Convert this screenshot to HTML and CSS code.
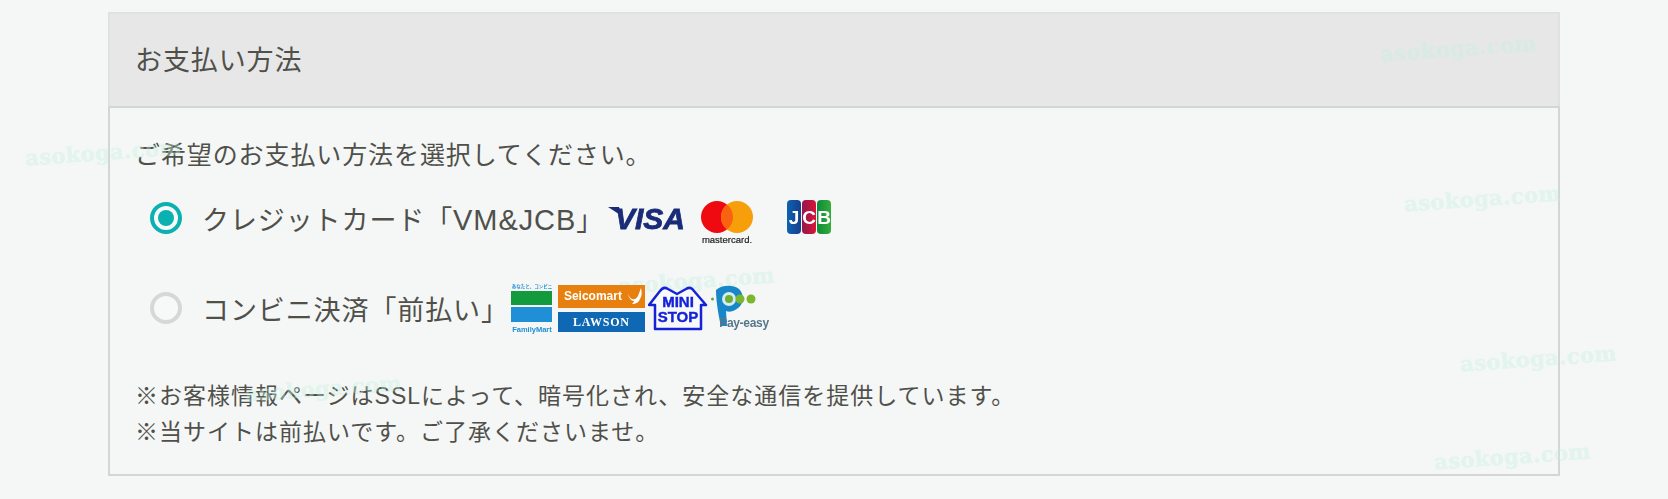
FILE: index.html
```html
<!DOCTYPE html>
<html lang="ja">
<head>
    <meta charset="UTF-8">
    <meta name="viewport" content="width=device-width, initial-scale=1.0">
    <title>お支払い方法</title>
    <link rel="stylesheet" href="styles.css">
</head>
<body>
<!-- Payment panel -->
<section class="panel">
    <h2 class="panel-title">お支払い方法</h2>
    <div class="panel-body">
        <p class="lead">ご希望のお支払い方法を選択してください。</p>

        <div class="pay-row pay-row-card">
            <span class="radio radio-on"></span>
            <span class="pay-label">クレジットカード「<span class="latin">VM&amp;JCB</span>」</span>
            <svg class="logo logo-visa" width="84" height="36" viewBox="0 0 84 36">
                <path d="M0 7h11l3 9z" fill="#1a2b78"/>
                <text x="7" y="29" class="visa-text">VISA</text>
            </svg>
            <svg class="logo logo-mc" width="54" height="48" viewBox="0 0 54 48">
                <circle cx="17" cy="17" r="16" fill="#ee0a10"/>
                <circle cx="37" cy="17" r="16" fill="#f79e0b"/>
                <path d="M27 4.500a16 16 0 0 1 0 25a16 16 0 0 1 0-25z" fill="#f9620f"/>
                <text x="27" y="43" class="mc-text">mastercard.</text>
            </svg>
            <svg class="logo logo-jcb" width="46" height="36" viewBox="0 0 46 36">
                <defs>
                    <linearGradient id="jcbBlue"><stop offset="0" stop-color="#0d62b0"/><stop offset="1" stop-color="#163f8c"/></linearGradient>
                    <linearGradient id="jcbRed"><stop offset="0" stop-color="#8e1a4e"/><stop offset="1" stop-color="#dc1437"/></linearGradient>
                    <linearGradient id="jcbGreen"><stop offset="0" stop-color="#0c8a3a"/><stop offset="1" stop-color="#35ad3a"/></linearGradient>
                </defs>
                <rect x="1" y="0" width="14" height="34" rx="4" fill="url(#jcbBlue)"/>
                <rect x="16" y="0" width="14" height="34" rx="4" fill="url(#jcbRed)"/>
                <rect x="31" y="0" width="14" height="34" rx="4" fill="url(#jcbGreen)"/>
                <text x="8" y="24" class="jcb-text">J</text>
                <text x="23" y="24" class="jcb-text">C</text>
                <text x="38" y="24" class="jcb-text">B</text>
            </svg>
        </div>

        <div class="pay-row pay-row-store">
            <span class="radio"></span>
            <span class="pay-label">コンビニ決済「前払い」</span>
            <svg class="logo logo-family" width="42" height="52" viewBox="0 0 42 52">
                <text x="21" y="6" class="fm-top">あなたと、コンビニ</text>
                <rect x="0" y="9" width="41" height="14" fill="#129a3c"/>
                <rect x="0" y="25" width="41" height="15" fill="#1f8fd6"/>
                <text x="21" y="50" class="fm-name">FamilyMart</text>
            </svg>
            <div class="store-stack">
                <div class="store-seico">
                    Seicomart
                    <svg class="seico-bird" width="16" height="20" viewBox="0 0 16 20">
                        <path d="M1 8c2 5 5 6 7 5 3-1 4-6 6-11 1 4 1 8-1 11-1 3-4 5-8 5 1-1 2-2 2-3-3 0-5-3-6-7z" fill="#fff"/>
                    </svg>
                </div>
                <div class="store-lawson">LAWSON</div>
            </div>
            <svg class="logo logo-mini" width="60" height="48" viewBox="0 0 60 48">
                <path d="M1 21 12 7c2-3 5-4 8-2l9 5 9-5c3-2 6-1 8 2l12 14h-5v24H7V21z" fill="#f8fafa" stroke="#1423d8" stroke-width="2.500" stroke-linejoin="round"/>
                <text x="30" y="23" class="mini-text">MINI</text>
                <text x="30" y="38" class="mini-text">STOP</text>
            </svg>
            <svg class="logo logo-easy" width="58" height="48" viewBox="0 0 58 48">
                <path d="M5 6C10 1 22 0 28 5c6 6 5 17-4 21-3 2-7 2-9 1l1 15h-6C7 30 5 15 5 6z" fill="#1787c9"/>
                <circle cx="18" cy="15" r="7" fill="#d5ecf3"/>
                <circle cx="18" cy="15" r="4" fill="#6fae37"/>
                <circle cx="1.500" cy="15" r="1.500" fill="#5aa84a"/>
                <circle cx="29" cy="15" r="4.500" fill="#7cb52e"/>
                <circle cx="40" cy="15" r="4.500" fill="#7cb52e"/>
                <text x="33" y="43" class="easy-text">Pay-easy</text>
            </svg>
        </div>

        <p class="note">※お客様情報ページはSSLによって、暗号化され、安全な通信を提供しています。<br>※当サイトは前払いです。ご了承くださいませ。</p>
    </div>
</section>

<!-- Watermarks -->
<span class="mark mark-1">asokoga.com</span>
<span class="mark mark-2">asokoga.com</span>
<span class="mark mark-3">asokoga.com</span>
<span class="mark mark-4">asokoga.com</span>
<span class="mark mark-5">asokoga.com</span>
<span class="mark mark-6">asokoga.com</span>
<span class="mark mark-7">asokoga.com</span>
</body>
</html>
```

FILE: styles.css
```css
body {
    font-family: "Liberation Sans", "Noto Sans CJK JP", sans-serif;
    background-color: #f5f7f6;
    color: #50504b;
    margin: 0;
    padding: 12px 108px 24px;
    overflow: hidden;
}

.panel-title {
    margin: 0;
    background-color: #e7e7e7;
    border: 2px solid #e0e1e0;
    border-bottom: none;
    font-size: 27px;
    font-weight: normal;
    letter-spacing: 0.9px;
    line-height: 38px;
    padding: 28px 25px 26px;
}

.panel-body {
    border: 2px solid #d3d6d4;
    padding: 28px 25px 24px;
}

.lead {
    margin: 0;
    font-size: 25px;
    letter-spacing: 0.9px;
    line-height: 38px;
}

.pay-row {
    display: flex;
    align-items: center;
    font-size: 27px;
    letter-spacing: 0.9px;
    padding-left: 15px;
}

.pay-row-card {
    height: 52px;
    margin-top: 18px;
}

.pay-row-store {
    height: 52px;
    margin-top: 38px;
}

.latin {
    font-size: 29px;
}

.radio {
    box-sizing: border-box;
    width: 32px;
    height: 32px;
    border: 4px solid #d6d7d6;
    border-radius: 50%;
    background-color: #f7f8f8;
    margin-right: 20px;
    display: flex;
    align-items: center;
    justify-content: center;
    flex-shrink: 0;
}

.radio-on {
    border-color: #0bb0b0;
}

.radio-on::after {
    content: "";
    width: 16px;
    height: 16px;
    border-radius: 50%;
    background-color: #0bb0b0;
}

.logo {
    display: block;
    flex-shrink: 0;
    position: relative;
    z-index: 1;
    filter: blur(0.4px);
}

.logo-visa {
    margin-left: 4px;
}

.logo-mc {
    margin-left: 8px;
    margin-top: 12px;
}

.logo-jcb {
    margin-left: 32px;
    margin-top: -1px;
}

.visa-text {
    font: italic bold 30px "Liberation Sans", sans-serif;
    fill: #1a2b78;
    stroke: #1a2b78;
    stroke-width: 0.8px;
    letter-spacing: 0;
}

.mc-text {
    font: 9.500px "Liberation Sans", sans-serif;
    fill: #222;
    stroke: #222;
    stroke-width: 0.2px;
    text-anchor: middle;
    letter-spacing: 0;
}

.jcb-text {
    font: bold 19px "Liberation Sans", sans-serif;
    fill: #fff;
    text-anchor: middle;
    letter-spacing: 0;
}

.logo-family {
    margin-left: 2px;
}

.fm-top {
    font: bold 4.500px "Noto Sans CJK JP", sans-serif;
    fill: #1f8fd6;
    text-anchor: middle;
    letter-spacing: 0;
}

.fm-name {
    font: bold 7.500px "Liberation Sans", sans-serif;
    fill: #1f8fd6;
    text-anchor: middle;
    letter-spacing: 0;
}

.store-stack {
    position: relative;
    z-index: 1;
    display: flex;
    flex-direction: column;
    gap: 4px;
    width: 87px;
    margin-left: 5px;
    filter: blur(0.4px);
}

.store-seico,
.store-lawson {
    color: #fff;
    letter-spacing: 0;
}

.store-seico {
    display: flex;
    justify-content: space-between;
    align-items: center;
    height: 23px;
    padding: 0 2px 0 6px;
    background-color: #e8800f;
    font-size: 12px;
    font-weight: bold;
}

.store-lawson {
    height: 20px;
    line-height: 20px;
    background-color: #0f68b4;
    font-family: "Liberation Serif", serif;
    font-size: 12px;
    font-weight: bold;
    letter-spacing: 0.8px;
    text-align: center;
}

.logo-mini {
    margin-left: 3px;
}

.mini-text {
    font: bold 15px "Liberation Sans", sans-serif;
    fill: #1423d8;
    stroke: #1423d8;
    stroke-width: 0.4px;
    text-anchor: middle;
    letter-spacing: 0;
}

.logo-easy {
    margin-left: 3px;
}

.easy-text {
    font: bold 12px "Liberation Sans", sans-serif;
    fill: #55778c;
    text-anchor: middle;
    letter-spacing: -0.3px;
}

.note {
    margin: 44px 0 0;
    font-size: 23px;
    line-height: 36px;
    letter-spacing: 1px;
}

/* Watermarks sit over the page, each one is placed by hand */
.mark {
    position: absolute;
    font-family: "DejaVu Serif", serif;
    font-weight: bold;
    font-size: 21px;
    letter-spacing: 0.4px;
    color: #c4f0df;
    -webkit-text-stroke: 0.7px #c4f0df;
    opacity: 0.38;
    transform: rotate(-4deg);
    white-space: nowrap;
    pointer-events: none;
}

.mark-1 { left: 1380px; top: 36px; }
.mark-2 { left: 1404px; top: 186px; }
.mark-3 { left: 1460px; top: 346px; }
.mark-4 { left: 1434px; top: 444px; }
.mark-5 { left: 25px; top: 140px; }
.mark-6 { left: 618px; top: 268px; }
.mark-7 { left: 245px; top: 376px; }
```
